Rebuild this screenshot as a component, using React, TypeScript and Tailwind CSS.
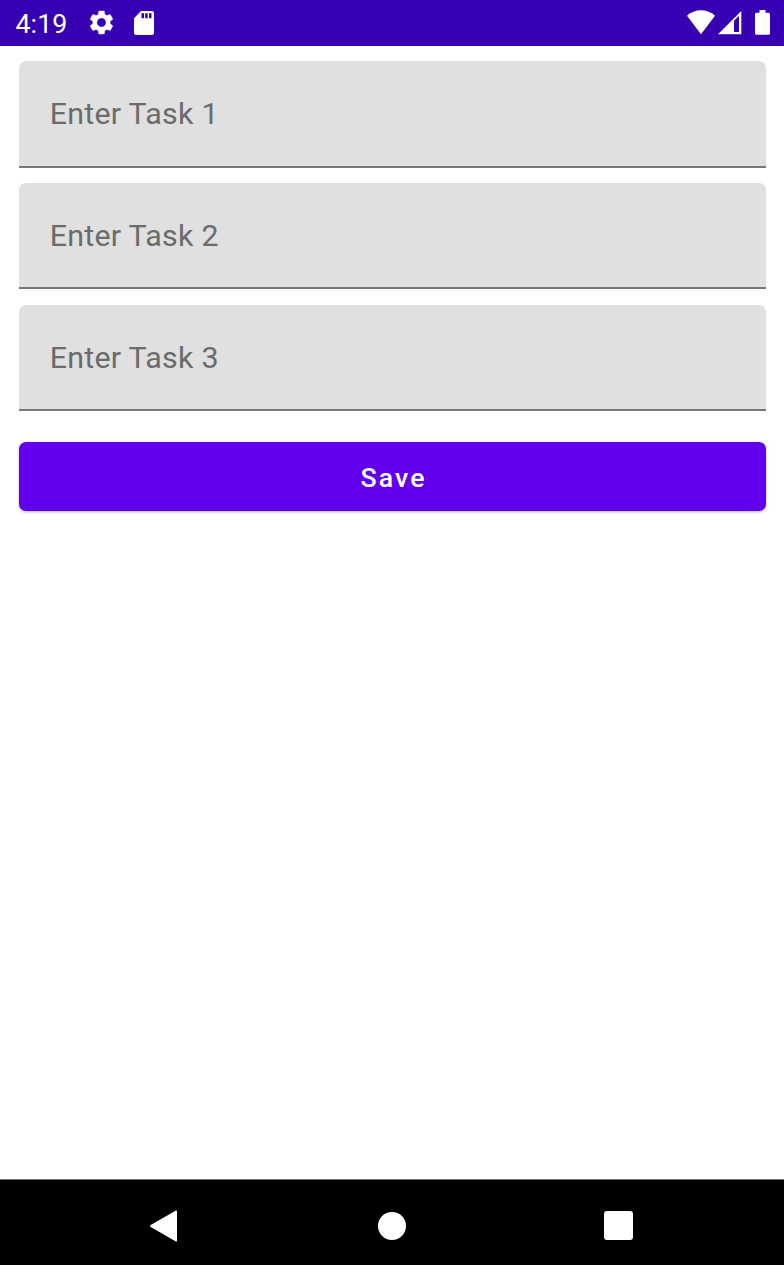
import React from "react";

function StatusBar() {
  return (
    <header className="flex h-[46px] shrink-0 items-center justify-between bg-[#3700b3] pl-[15px] pr-[14px] text-white">
      <div className="flex h-full items-center">
        <span className="w-[72px] pl-[0.5px] pt-[2px] text-[26.7px] leading-none tracking-[0.1px]">4:19</span>
        <svg className="-mt-px h-[29px] w-[29px]" viewBox="0 0 24 24" fill="currentColor" stroke="currentColor" strokeWidth="0.3" aria-hidden="true">
          <path d="M19.14 12.94c.04-.3.06-.61.06-.94 0-.32-.02-.64-.07-.94l2.03-1.58c.18-.14.23-.41.12-.61l-1.92-3.32c-.12-.22-.37-.29-.59-.22l-2.39.96c-.5-.38-1.03-.7-1.62-.94l-.36-2.54c-.04-.24-.24-.41-.48-.41h-3.84c-.24 0-.43.17-.47.41l-.36 2.54c-.59.24-1.13.57-1.62.94l-2.39-.96c-.22-.08-.47 0-.59.22L2.74 8.87c-.12.21-.08.47.12.61l2.03 1.58c-.05.3-.09.63-.09.94s.02.64.07.94l-2.03 1.58c-.18.14-.23.41-.12.61l1.92 3.32c.12.22.37.29.59.22l2.39-.96c.5.38 1.03.7 1.62.94l.36 2.54c.05.24.24.41.48.41h3.84c.24 0 .44-.17.47-.41l.36-2.54c.59-.24 1.13-.56 1.62-.94l2.39.96c.22.08.47 0 .59-.22l1.92-3.32c.12-.22.07-.47-.12-.61l-2.01-1.58zM12 15.8A3.8 3.8 0 1 1 12 8.2a3.8 3.8 0 0 1 0 7.6z" />
        </svg>
        <svg className="-mt-px ml-[18px] h-6 w-5" viewBox="0 0 20 24" fill="currentColor" aria-hidden="true">
          <path fillRule="evenodd" d="M7 0H17.5Q20 0 20 2.5V21.5Q20 24 17.5 24H2.5Q0 24 0 21.5V7.2ZM7.5 2.3V7.3H10V2.3ZM11.2 2.3V7.3H13.7V2.3ZM15 2.3V7.3H17.5V2.3Z" />
        </svg>
      </div>
      <div className="-mt-px flex items-center">
        <svg className="h-6 w-7 overflow-visible" viewBox="0 0 28 24" fill="currentColor" aria-hidden="true">
          <path d="M0 4.7Q6-.8 14-.8T28 4.7L14 23.2Z" />
        </svg>
        <svg className="ml-[3px] h-6 w-6" viewBox="0 0 24 24" fill="currentColor" aria-hidden="true">
          <path fillRule="evenodd" d="M23.3 0V23.2H0ZM16 9.7V21H21V4.7Z" />
        </svg>
        <svg className="ml-[13px] h-[25px] w-[15px]" viewBox="0 0 15 25" fill="currentColor" aria-hidden="true">
          <path d="M4.5 0H10.5V2.7H13.5Q15 2.7 15 4.2V23.3Q15 24.8 13.5 24.8H1.5Q0 24.8 0 23.3V4.2Q0 2.7 1.5 2.7H4.5Z" />
        </svg>
      </div>
    </header>
  );
}

function TaskField({ number }: { number: number }) {
  return (
    <input
      type="text"
      aria-label={`Enter Task ${number}`}
      placeholder={`Enter Task ${number}`}
      className="block h-[106.6px] w-full rounded-t-[7px] border-b-2 border-[#77777a] bg-[#e0e0e0] px-[30.7px] pt-[1px] text-[30.4px] tracking-[0.25px] text-black outline-none placeholder:text-[#6b6b6b] placeholder:opacity-100"
    />
  );
}

function NavigationBar() {
  return (
    <nav className="flex h-[86px] shrink-0 items-center border-t border-[#777777] bg-black pl-[149px] pt-[6px] text-white">
      <button aria-label="Back" className="h-[32px] w-[29px]">
        <svg className="h-full w-full" viewBox="0 0 29 32" fill="currentColor">
          <path d="M1.7 14.9 26.5.8Q28 0 28 1.5V30.5Q28 32 26.5 31.2L1.7 17.1Q.3 16 1.7 14.9Z" />
        </svg>
      </button>
      <button aria-label="Home" className="ml-[200.4px] h-7 w-7 rounded-full bg-white" />
      <button aria-label="Overview" className="ml-[197.6px] h-[29px] w-[29px] rounded-[3px] bg-white" />
    </nav>
  );
}

export default function App() {
  return (
    <div className="flex h-[1265px] w-[784px] flex-col bg-white font-['Roboto',sans-serif]">
      <StatusBar />
      <main className="flex flex-1 flex-col pl-[19px] pr-[18px] pt-[15px]">
        <div className="flex flex-col gap-[15.2px]">
          <TaskField number={1} />
          <TaskField number={2} />
          <TaskField number={3} />
        </div>
        <button className="mt-[31px] h-[69px] w-full rounded-[7px] bg-[#6200ee] pl-[2px] pt-[3px] text-[26.7px] font-medium leading-none tracking-[2.1px] text-white shadow-[0_1px_3px_rgba(0,0,0,0.3)]">
          Save
        </button>
      </main>
      <NavigationBar />
    </div>
  );
}
